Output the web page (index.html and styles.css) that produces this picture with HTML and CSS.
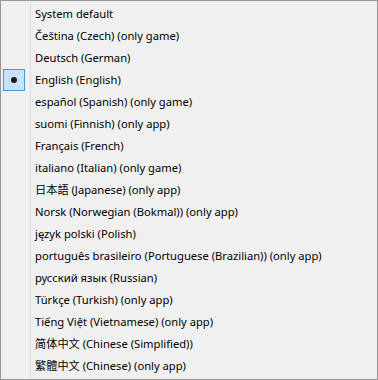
FILE: index.html
```html
<!DOCTYPE html>
<html lang="en">
<head>
<meta charset="UTF-8" />
<title>Language</title>
<link rel="stylesheet" href="styles.css">
</head>
<body>
<ul class="menu">
  <li><span class="mark"></span><span class="label">System default</span></li>
  <li><span class="mark"></span><span class="label">Čeština (Czech) (only game)</span></li>
  <li><span class="mark"></span><span class="label">Deutsch (German)</span></li>
  <li class="checked"><span class="mark"><span class="dot"></span></span><span class="label">English (English)</span></li>
  <li><span class="mark"></span><span class="label">español (Spanish) (only game)</span></li>
  <li><span class="mark"></span><span class="label">suomi (Finnish) (only app)</span></li>
  <li><span class="mark"></span><span class="label">Français (French)</span></li>
  <li><span class="mark"></span><span class="label">italiano (Italian) (only game)</span></li>
  <li><span class="mark"></span><span class="label">日本語 (Japanese) (only app)</span></li>
  <li><span class="mark"></span><span class="label">Norsk (Norwegian (Bokmal)) (only app)</span></li>
  <li><span class="mark"></span><span class="label">język polski (Polish)</span></li>
  <li><span class="mark"></span><span class="label">português brasileiro (Portuguese (Brazilian)) (only app)</span></li>
  <li><span class="mark"></span><span class="label">русский язык (Russian)</span></li>
  <li><span class="mark"></span><span class="label">Türkçe (Turkish) (only app)</span></li>
  <li><span class="mark"></span><span class="label">Tiếng Việt (Vietnamese) (only app)</span></li>
  <li><span class="mark"></span><span class="label">简体中文 (Chinese (Simplified))</span></li>
  <li><span class="mark"></span><span class="label">繁體中文 (Chinese) (only app)</span></li>
</ul>
</body>
</html>
```

FILE: styles.css
```css
body {
  margin: 0;
  background-color: #f0f0f0;
  font-family: "Noto Sans", "Noto Sans CJK SC", sans-serif;
  font-size: 11.2px;
  color: #000;
}

.menu {
  list-style: none;
  margin: 0;
  padding: 2px;
  width: 378px;
  height: 380px;
  box-sizing: border-box;
  border: 1px solid #979797;
  background-color: #f0f0f0;
}

.menu li {
  display: flex;
  height: 22px;
}

.mark {
  width: 22px;
  height: 22px;
  box-sizing: border-box;
  display: flex;
  justify-content: center;
  align-items: center;
}

.checked .mark {
  background-color: #c9e0f7;
  border: 1px solid #3d9be0;
}

.dot {
  width: 6px;
  height: 6px;
  border-radius: 50%;
  background-color: #1a1a1a;
}

.label {
  flex: 1;
  margin-left: 5px;
  padding-left: 4px;
  border-left: 1px solid #dcdcdc;
  line-height: 22px;
  white-space: nowrap;
}
```
